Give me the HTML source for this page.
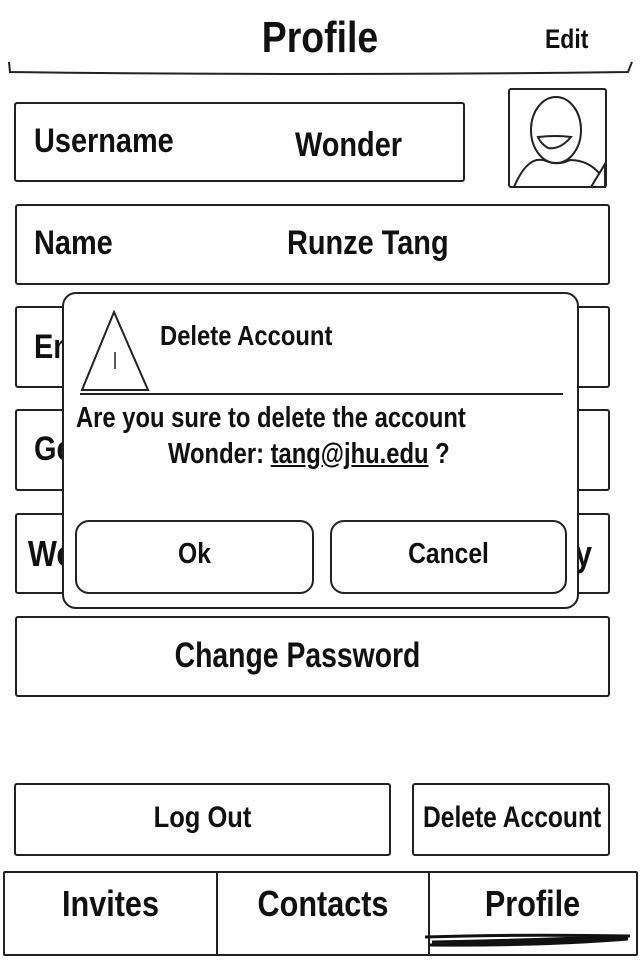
<!DOCTYPE html>
<html><head><meta charset="utf-8"><style>
body{margin:0;width:640px;height:960px;background:#fff;position:relative;overflow:hidden;font-family:"Liberation Sans Narrow","Liberation Sans",sans-serif;font-weight:bold;color:#111}
.b{position:absolute;border:2px solid #222;border-radius:3px;box-sizing:border-box;background:#fff}
.t{position:absolute;white-space:nowrap;transform:scaleX(.85);transform-origin:left top;line-height:1}
.c{position:absolute;white-space:nowrap;line-height:1;text-align:center;transform:scaleX(.85)}
</style></head><body>
<div class="c" style="left:220px;width:200px;top:16px;font-size:44px">Profile</div>
<div class="t" style="left:545px;top:26px;font-size:27px">Edit</div>
<svg style="position:absolute;left:0;top:0" width="640" height="80"><path d="M9 62 L10 72 Q320 76 628 72 L632 62" fill="none" stroke="#222" stroke-width="2"/></svg>

<div class="b" style="left:14px;top:102px;width:451px;height:80px"></div>
<div class="t" style="left:34px;top:124px;font-size:34px">Username</div>
<div class="t" style="left:295px;top:128px;font-size:34px">Wonder</div>

<div class="b" style="left:508px;top:88px;width:99px;height:100px"></div>
<svg style="position:absolute;left:508px;top:88px" width="100" height="100"><ellipse cx="48" cy="42" rx="25" ry="33" fill="none" stroke="#222" stroke-width="2"/><path d="M30 49 Q48 47 63 49 Q52 62 40 60 Q33 56 30 49Z" fill="none" stroke="#222" stroke-width="2"/><path d="M6 99 Q20 66 38 73 Q50 78 62 72 Q80 72 92 86" fill="none" stroke="#222" stroke-width="2"/><path d="M83 99 L97 76 L97 99Z" fill="none" stroke="#222" stroke-width="2"/></svg>

<div class="b" style="left:15px;top:204px;width:595px;height:81px"></div>
<div class="t" style="left:34px;top:226px;font-size:34px">Name</div>
<div class="t" style="left:287px;top:226px;font-size:34px">Runze Tang</div>

<div class="b" style="left:15px;top:306px;width:595px;height:82px"></div>
<div class="t" style="left:34px;top:330px;font-size:34px">Email</div>
<div class="b" style="left:15px;top:409px;width:595px;height:82px"></div>
<div class="t" style="left:34px;top:432px;font-size:34px">Gender</div>
<div class="b" style="left:15px;top:513px;width:595px;height:81px"></div>
<div class="t" style="left:28px;top:536px;font-size:36px">Wonder</div>
<div class="t" style="left:575px;top:536px;font-size:36px">y</div>

<div class="b" style="left:62px;top:292px;width:517px;height:317px;border-radius:14px"></div>
<svg style="position:absolute;left:62px;top:292px" width="517" height="317"><path d="M52 20 L20 98 L86 98Z" fill="none" stroke="#222" stroke-width="2"/><path d="M53 60 L53 77" stroke="#222" stroke-width="1.5"/><path d="M18 102 L501 102" stroke="#222" stroke-width="2"/></svg>
<div class="t" style="left:160px;top:322px;font-size:28px">Delete Account</div>
<div class="t" style="left:76px;top:404px;font-size:29px;transform:scaleX(.82)">Are you sure to delete the account</div>
<div class="t" style="left:168px;top:440px;font-size:29px;transform:scaleX(.82)">Wonder: <span style="text-decoration:underline">tang@jhu.edu</span> ?</div>
<div class="b" style="left:75px;top:520px;width:239px;height:74px;border-radius:14px"></div>
<div class="c" style="left:75px;width:239px;top:540px;font-size:29px">Ok</div>
<div class="b" style="left:330px;top:520px;width:237px;height:74px;border-radius:14px"></div>
<div class="c" style="left:330px;width:237px;top:540px;font-size:29px">Cancel</div>

<div class="b" style="left:15px;top:616px;width:595px;height:81px"></div>
<div class="c" style="left:15px;width:565px;top:638px;font-size:35px;transform:scaleX(.81)">Change Password</div>

<div class="b" style="left:14px;top:783px;width:377px;height:73px"></div>
<div class="c" style="left:14px;width:377px;top:803px;font-size:30px">Log Out</div>
<div class="b" style="left:412px;top:783px;width:198px;height:73px"></div>
<div class="t" style="left:423px;top:803px;font-size:30px;transform:scaleX(.82)">Delete Account</div>

<div class="b" style="left:3px;top:871px;width:635px;height:85px;border-radius:2px"></div>
<div style="position:absolute;left:216px;top:872px;width:2px;height:83px;background:#222"></div>
<div style="position:absolute;left:428px;top:872px;width:2px;height:83px;background:#222"></div>
<div class="c" style="left:5px;width:211px;top:886px;font-size:36px">Invites</div>
<div class="c" style="left:218px;width:210px;top:886px;font-size:36px">Contacts</div>
<div class="c" style="left:430px;width:205px;top:886px;font-size:36px">Profile</div>
<svg style="position:absolute;left:420px;top:930px" width="220" height="20"><path d="M5 7 Q100 4 210 6 Q120 10 12 12 Q110 13 208 9 Q120 16 10 15" fill="none" stroke="#111" stroke-width="3"/></svg>
</body></html>
